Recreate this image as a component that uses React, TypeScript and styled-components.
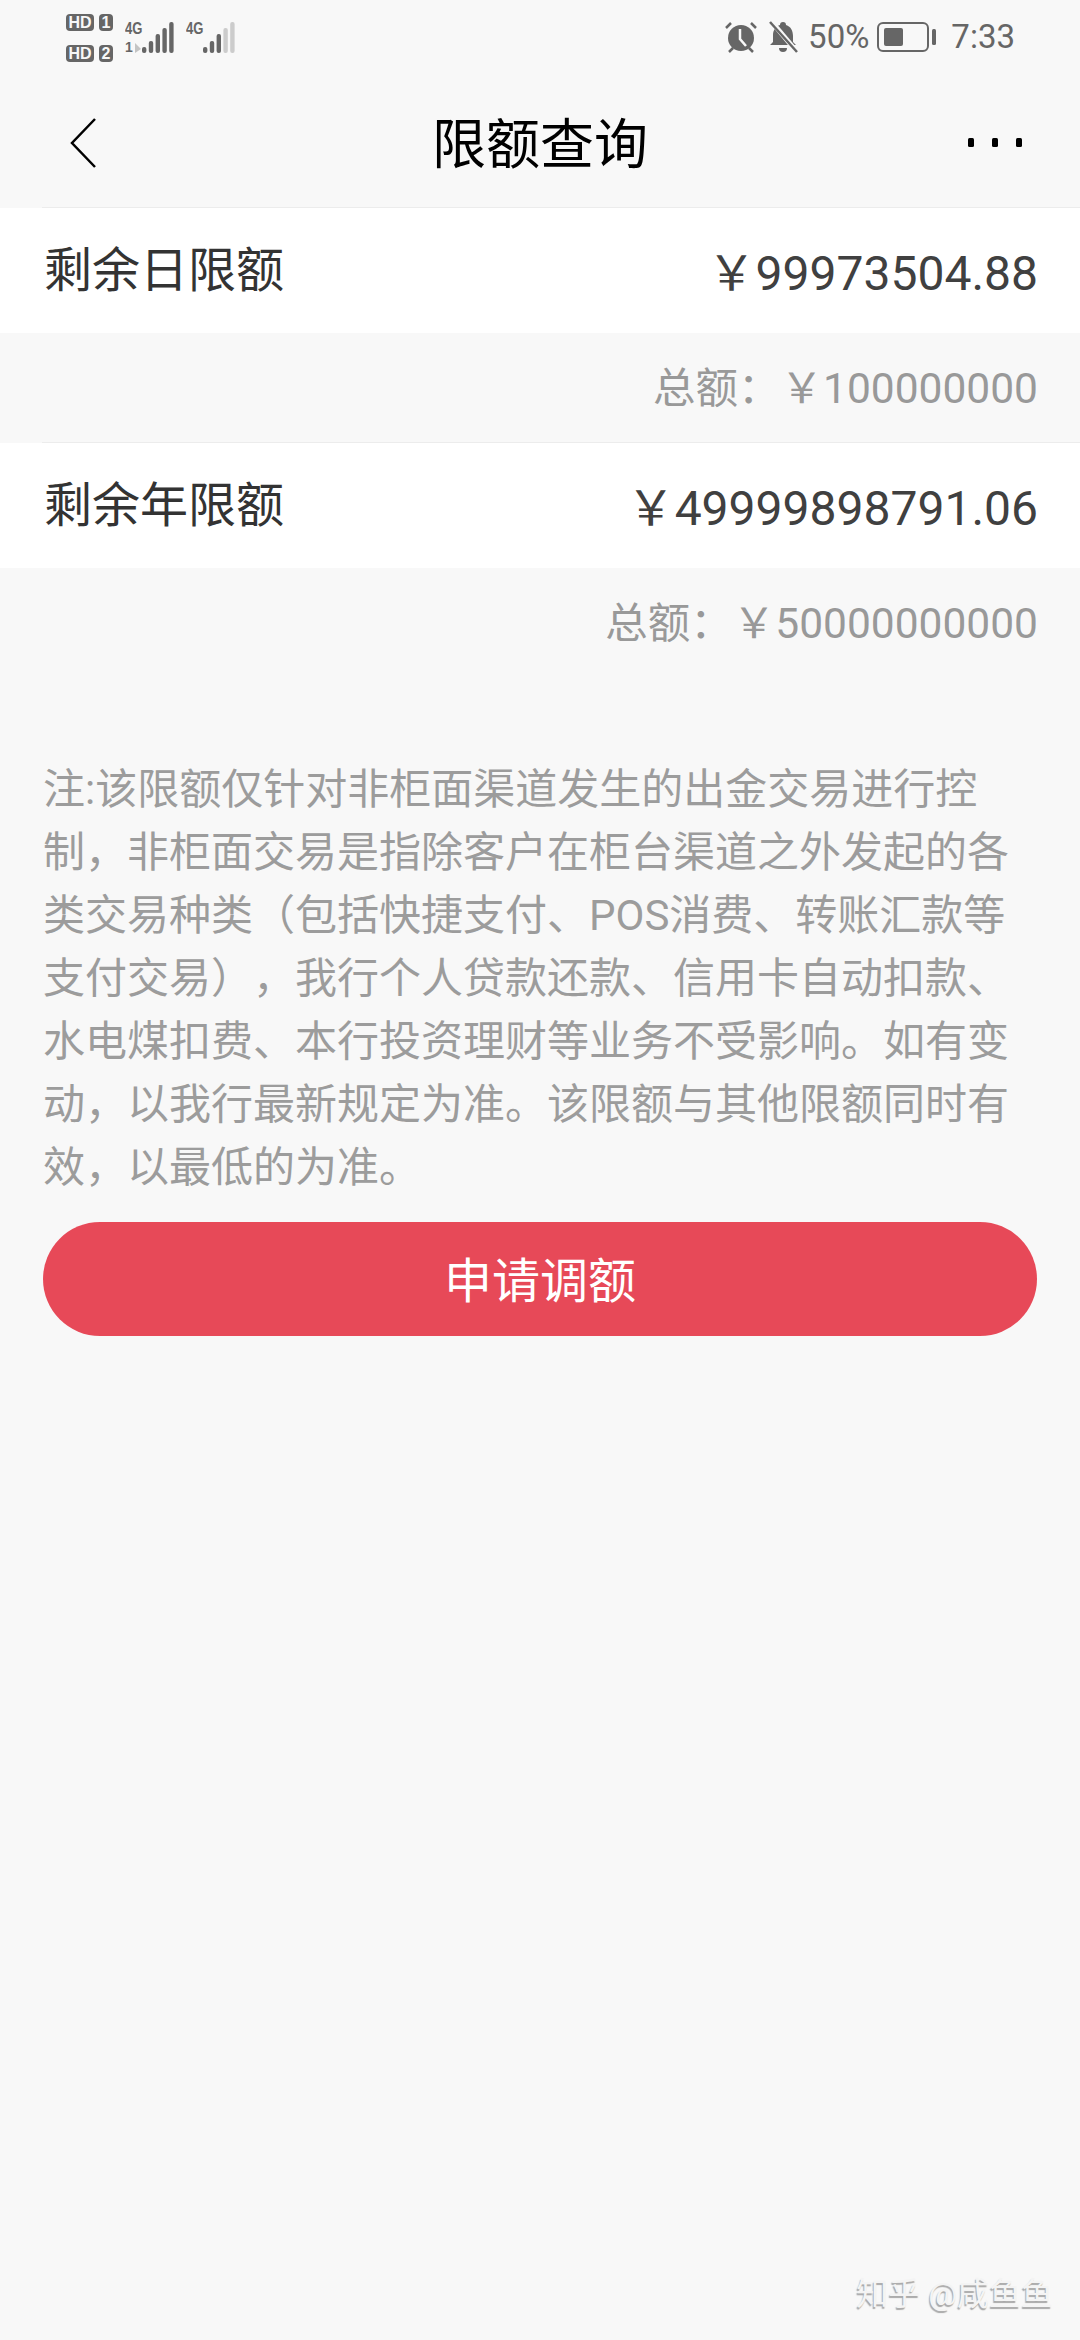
import styled, { createGlobalStyle } from 'styled-components'

const GlobalStyle = createGlobalStyle`
  html, body {
    margin: 0;
    padding: 0;
    background: #f8f8f8;
  }
  * {
    box-sizing: border-box;
  }
`

const Page = styled.div`
  position: relative;
  width: 1080px;
  height: 2340px;
  overflow: hidden;
  background: #f8f8f8;
  font-family: Roboto, "Noto Sans CJK SC", sans-serif;
  text-spacing-trim: space-all;
`

const StatusBar = styled.div`
  height: 68px;
  padding: 14px 65px 0 66px;
  display: flex;
  justify-content: space-between;
  align-items: flex-start;
`

const StatusLeft = styled.div`
  display: flex;
  gap: 12px;
`

const SimColumn = styled.div`
  display: flex;
  flex-direction: column;
  gap: 14px;
`

const SimRow = styled.div`
  display: flex;
  gap: 5px;
`

const Badge = styled.span<{ $wide?: boolean }>`
  width: ${props => (props.$wide ? '28px' : '14px')};
  height: 17px;
  border-radius: 4px;
  background: #666;
  color: #f8f8f8;
  font-family: "Liberation Sans", sans-serif;
  font-size: 16px;
  font-weight: 700;
  line-height: 17px;
  text-align: center;
`

const SignalGroup = styled.div`
  display: flex;
  height: 31px;
  margin-top: 8px;
`

const NetColumn = styled.div`
  width: 17px;
  display: flex;
  flex-direction: column;
  justify-content: space-between;
`

const NetLabel = styled.span`
  display: block;
  font-family: "Liberation Sans", sans-serif;
  font-size: 17px;
  line-height: 13px;
  font-weight: 700;
  color: #666;
  transform: scaleX(0.77);
  transform-origin: left center;
`

const Activity = styled.span`
  display: flex;
  align-items: center;
  gap: 2px;
  font-family: "Liberation Sans", sans-serif;
  font-size: 14px;
  line-height: 11px;
  font-weight: 700;
  color: #666;
`

const StatusRight = styled.div`
  display: flex;
  align-items: center;
  height: 40px;
  margin-top: 3px;
`

const StatusText = styled.span`
  font-size: 33px;
  line-height: 40px;
  color: #666;
`

const NavBar = styled.div`
  height: 140px;
  padding: 10px 56px 0;
  display: grid;
  grid-template-columns: 1fr auto 1fr;
  align-items: center;
`

const BackSvg = styled.svg`
  margin-left: 14px;
`

const MoreSvg = styled.svg`
  justify-self: end;
`

const Title = styled.div`
  font-size: 54px;
  line-height: 70px;
  color: #000;
  margin-top: 5px;
`

const LimitRow = styled.div`
  height: 125px;
  background: #fff;
  padding: 0 42px 0 44px;
  display: flex;
  align-items: center;
  justify-content: space-between;
  position: relative;

  &::before {
    content: '';
    position: absolute;
    top: -1px;
    left: 42px;
    right: 0;
    height: 1px;
    background: #ececec;
  }
`

const RowLabel = styled.span`
  font-size: 48px;
  line-height: 60px;
  color: #333;
  margin-top: 1px;
`

const RowValue = styled.span`
  font-size: 48px;
  line-height: 60px;
  color: #404040;
  margin-top: 6px;
`

const TotalRow = styled.div`
  height: 110px;
  padding: 0 42px 8px 0;
  display: flex;
  align-items: center;
  justify-content: flex-end;
  font-size: 42.5px;
  color: #999;
`

const Note = styled.div`
  margin-top: 80px;
  padding: 0 43px;
  font-size: 42px;
  line-height: 63px;
  color: #9c9c9c;
`

const ApplyButton = styled.button`
  display: block;
  width: 994px;
  height: 114px;
  margin: 23px 0 0 43px;
  padding: 0 0 5px;
  border: none;
  border-radius: 57px;
  background: #e74958;
  color: #fff;
  font-family: inherit;
  font-size: 48px;
`

const Watermark = styled.div`
  position: absolute;
  right: 27px;
  bottom: 27px;
  font-size: 32px;
  line-height: 38px;
  color: #f4f4f4;
  text-shadow: -1px 2px 1px #a8a8a8;
`

const BAR_HEIGHTS = [6, 12, 19, 25, 31]

function SignalBars({ strong }: { strong: number }) {
  return (
    <svg width="32" height="31" viewBox="0 0 32 31">
      {BAR_HEIGHTS.map((h, i) => (
        <rect
          key={h}
          x={i * 6.8}
          y={31 - h}
          width="4.4"
          height={h}
          rx="2"
          fill={i < strong ? '#666' : '#ccc'}
        />
      ))}
    </svg>
  )
}

const AlarmIcon = () => (
  <svg width="32" height="32" viewBox="0 0 32 32" style={{ marginRight: 12 }}>
    <circle cx="16" cy="17" r="13" fill="#666" />
    <path d="M15 8v10l6 7" stroke="#f8f8f8" strokeWidth="2.500" fill="none" />
    <path d="M1 7l5-5M31 7l-5-5M4 31l4-4M28 31l-4-4" stroke="#666" strokeWidth="2.500" fill="none" />
  </svg>
)

const MutedBell = () => (
  <svg width="29" height="32" viewBox="0 0 29 32" style={{ marginRight: 10 }}>
    <path d="M14 1a3 3 0 0 1 3 3c5 1.500 7 6 7 11v6l3 3H1l3-3v-7c0-5 3-9 7-10a3 3 0 0 1 3-3z" fill="#666" />
    <path d="M10 27h8a4 4 0 0 1-8 0z" fill="#666" />
    <path d="M2 0l26 31" stroke="#f8f8f8" strokeWidth="5" />
    <path d="M1 1l27 30" stroke="#666" strokeWidth="2.500" />
  </svg>
)

const BatteryIcon = () => (
  <svg width="59" height="30" viewBox="0 0 59 30" style={{ margin: '0 15px 0 8px' }}>
    <rect x="1" y="1" width="50" height="28" rx="5" fill="none" stroke="#666" strokeWidth="2" />
    <rect x="7" y="6" width="19" height="18" rx="2" fill="#666" />
    <rect x="55" y="7" width="4" height="16" rx="1.500" fill="#666" />
  </svg>
)

const ActivityArrow = () => (
  <svg width="6" height="10" viewBox="0 0 6 10">
    <path d="M0 0l6 6-6 4z" fill="#c4c4c4" />
  </svg>
)

const BackIcon = () => (
  <BackSvg width="26" height="50" viewBox="0 0 26 50">
    <path d="M25 1L2 25l23 24" fill="none" stroke="#000" strokeWidth="2.500" />
  </BackSvg>
)

const MoreIcon = () => (
  <MoreSvg width="56" height="10" viewBox="0 0 56 10">
    <rect x="0" y="0" width="6" height="9" rx="1.500" fill="#000" />
    <rect x="24" y="0" width="6" height="9" rx="1.500" fill="#000" />
    <rect x="48" y="0" width="6" height="9" rx="1.500" fill="#000" />
  </MoreSvg>
)

export default function App() {
  return (
    <Page>
      <GlobalStyle />
      <StatusBar>
        <StatusLeft>
          <SimColumn>
            <SimRow>
              <Badge $wide>HD</Badge>
              <Badge>1</Badge>
            </SimRow>
            <SimRow>
              <Badge $wide>HD</Badge>
              <Badge>2</Badge>
            </SimRow>
          </SimColumn>
          <SignalGroup>
            <NetColumn>
              <NetLabel>4G</NetLabel>
              <Activity>
                1
                <ActivityArrow />
              </Activity>
            </NetColumn>
            <SignalBars strong={5} />
          </SignalGroup>
          <SignalGroup>
            <NetColumn>
              <NetLabel>4G</NetLabel>
            </NetColumn>
            <SignalBars strong={3} />
          </SignalGroup>
        </StatusLeft>
        <StatusRight>
          <AlarmIcon />
          <MutedBell />
          <StatusText>50%</StatusText>
          <BatteryIcon />
          <StatusText>7:33</StatusText>
        </StatusRight>
      </StatusBar>
      <NavBar>
        <BackIcon />
        <Title>限额查询</Title>
        <MoreIcon />
      </NavBar>
      <LimitRow>
        <RowLabel>剩余日限额</RowLabel>
        <RowValue>￥99973504.88</RowValue>
      </LimitRow>
      <TotalRow>总额：￥100000000</TotalRow>
      <LimitRow>
        <RowLabel>剩余年限额</RowLabel>
        <RowValue>￥49999898791.06</RowValue>
      </LimitRow>
      <TotalRow>总额：￥50000000000</TotalRow>
      <Note>
        注:该限额仅针对非柜面渠道发生的出金交易进行控制，非柜面交易是指除客户在柜台渠道之外发起的各类交易种类（包括快捷支付、POS消费、转账汇款等支付交易），我行个人贷款还款、信用卡自动扣款、水电煤扣费、本行投资理财等业务不受影响。如有变动，以我行最新规定为准。该限额与其他限额同时有效，以最低的为准。
      </Note>
      <ApplyButton>申请调额</ApplyButton>
      <Watermark>知乎 @咸鱼鱼</Watermark>
    </Page>
  )
}
